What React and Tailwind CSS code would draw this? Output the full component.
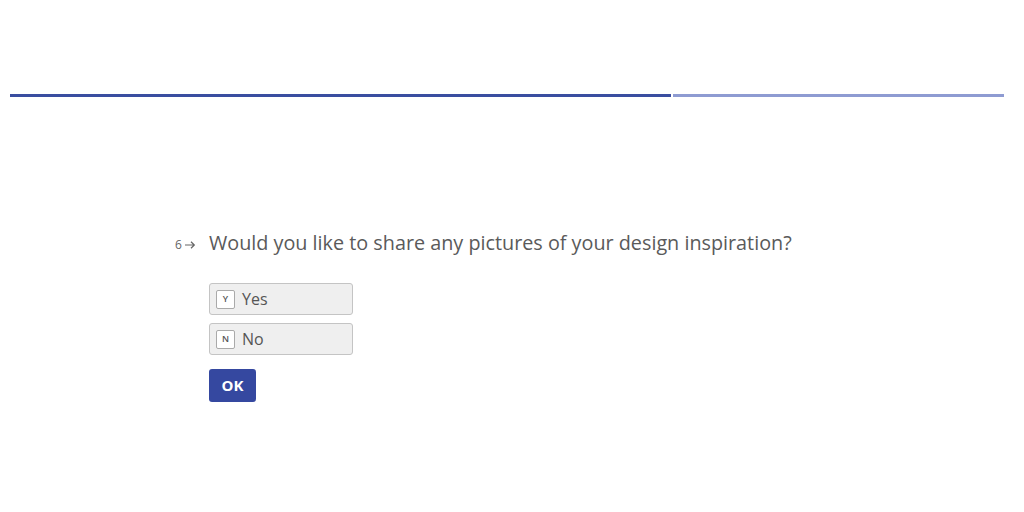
export default function App() {
  const options = [
    { key: 'Y', label: 'Yes' },
    { key: 'N', label: 'No' },
  ];

  return (
    <div className="w-[1024px] h-[512px] bg-white font-['Open_Sans',sans-serif] overflow-hidden">
      <div className="pt-[94px] pl-[10px] pr-[20px] flex">
        <div className="h-[3px] w-[661px] bg-[#3a4ea0]" />
        <div className="h-[3px] ml-[2px] flex-1 bg-[#8e9bd2]" />
      </div>

      <div className="mt-[132px] pl-[175px] flex items-start">
        <div className="w-[34px] flex items-center text-[12px] text-[#666] pt-[7px] gap-[2px]">
          <span>6</span>
          <svg width="12" height="10" viewBox="0 0 12 10" fill="none" stroke="#666" strokeWidth="1.2">
            <path d="M1 5h9.5M7 1.8L10.3 5 7 8.2" />
          </svg>
        </div>
        <div>
          <p className="text-[19.8px] leading-[28px] text-[#5a5a5a]">
            Would you like to share any pictures of your design inspiration?
          </p>
          <div className="mt-[26px] flex flex-col gap-[8px]">
            {options.map((o) => (
              <div
                key={o.key}
                className="w-[144px] h-[32px] rounded-[3px] border border-[#c4c4c4] bg-[#efefef] flex items-center px-[6px] gap-[7px]"
              >
                <span className="w-[19px] h-[19px] border border-[#aaa] bg-white rounded-[2px] flex items-center justify-center text-[9px] font-semibold text-[#555]">
                  {o.key}
                </span>
                <span className="text-[16px] text-[#555]">{o.label}</span>
              </div>
            ))}
          </div>
          <button className="mt-[14px] w-[47px] h-[33px] rounded-[3px] bg-[#3548a0] text-white text-[15px] font-bold flex items-center justify-center">
            OK
          </button>
        </div>
      </div>
    </div>
  );
}
